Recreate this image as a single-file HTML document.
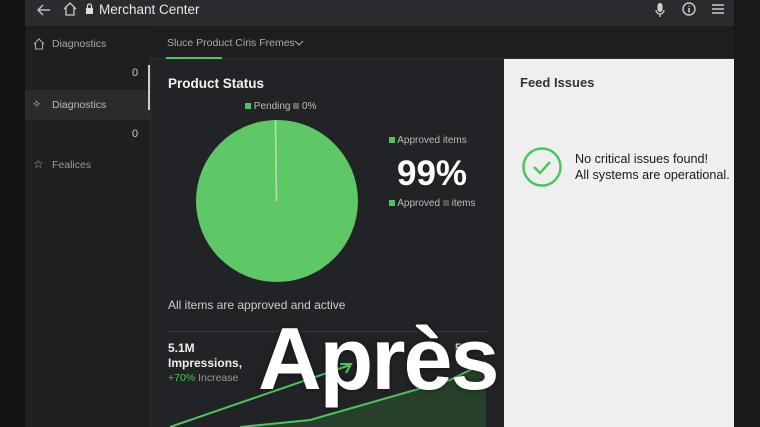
<!DOCTYPE html>
<html><head><meta charset="utf-8"><style>
*{margin:0;padding:0;box-sizing:border-box}
body{width:760px;height:427px;overflow:hidden;background:#151617;font-family:"Liberation Sans",sans-serif;position:relative}
.a{position:absolute}
</style></head><body>
<div class="a" style="left:0;top:0;width:25px;height:427px;background:#131415"></div>
<div class="a" style="left:734px;top:0;width:26px;height:427px;background:#18191a"></div>
<div class="a" style="left:25px;top:0;width:709px;height:26px;background:#2a2b2e"></div>
<div class="a" style="left:25px;top:26px;width:125px;height:401px;background:#1e1f21"></div>
<div class="a" style="left:25px;top:90px;width:125px;height:30px;background:#2a2b2d"></div>
<div class="a" style="left:148px;top:65px;width:2px;height:45px;background:#ccc"></div>
<div class="a" style="left:150px;top:26px;width:584px;height:33px;background:#1d1e20;border-bottom:1px solid #2e2f31"></div>
<div class="a" style="left:150px;top:59px;width:354px;height:368px;background:#222326;border-left:1px solid #2e2f31"></div>
<div class="a" style="left:504px;top:59px;width:230px;height:368px;background:#efefef"></div>
<svg class="a" style="left:34px;top:2px" width="20" height="16" viewBox="0 0 20 16"><path d="M16 8H4M9 3L4 8l5 5" stroke="#bbb" stroke-width="1.5" fill="none"/></svg>
<svg class="a" style="left:62px;top:1px" width="16" height="16" viewBox="0 0 16 16"><path d="M2 8L8 2l6 6M4 6.5V14h8V6.5" stroke="#ccc" stroke-width="1.3" fill="none"/></svg>
<svg class="a" style="left:85px;top:3px" width="9" height="11" viewBox="0 0 9 11"><rect x="1" y="5" width="7" height="6" fill="#ddd"/><path d="M2.5 5V3a2 2 0 0 1 4 0v2" stroke="#ddd" stroke-width="1.3" fill="none"/></svg>
<div class="a" style="left:99px;top:2px;color:#e6e6e6;font-size:13.5px">Merchant Center</div>
<svg class="a" style="left:654px;top:2px" width="12" height="16" viewBox="0 0 12 16"><rect x="3.5" y="1" width="5" height="9" rx="2.5" fill="#ccc"/><path d="M2 8a4 4 0 0 0 8 0M6 12v3" stroke="#ccc" stroke-width="1.3" fill="none"/></svg>
<svg class="a" style="left:681px;top:1px" width="16" height="16" viewBox="0 0 16 16"><circle cx="8" cy="8" r="6" stroke="#ccc" stroke-width="1.4" fill="none"/><path d="M8 7v4.5M8 4.5v1" stroke="#ccc" stroke-width="1.6"/></svg>
<svg class="a" style="left:711px;top:2px" width="14" height="14" viewBox="0 0 14 14"><path d="M1 3h12M1 7h12M1 11h12" stroke="#ccc" stroke-width="1.4"/></svg>
<svg class="a" style="left:33px;top:38px" width="12" height="12" viewBox="0 0 12 12"><path d="M1 6l5-5 5 5M2.5 5v6h7V5" stroke="#aaa" stroke-width="1.1" fill="none"/></svg>
<div class="a" style="left:52px;top:38px;color:#aaa;font-size:10.5px">Diagnostics</div>
<div class="a" style="left:132px;top:67px;color:#ccc;font-size:11px">0</div>
<div class="a" style="left:33px;top:98px;color:#aaa;font-size:11px">⟡</div>
<div class="a" style="left:52px;top:99px;color:#bbb;font-size:10.5px">Diagnostics</div>
<div class="a" style="left:132px;top:128px;color:#ccc;font-size:11px">0</div>
<div class="a" style="left:33px;top:157px;color:#aaa;font-size:12px">☆</div>
<div class="a" style="left:52px;top:159px;color:#999;font-size:10.5px">Fealices</div>
<div class="a" style="left:167px;top:37px;color:#aaa;font-size:10.5px">Sluce Product Ciris Fremes</div>
<svg class="a" style="left:294px;top:39px" width="10" height="8" viewBox="0 0 10 8"><path d="M1 2l4 4 4-4" stroke="#aaa" stroke-width="1.1" fill="none"/></svg>
<div class="a" style="left:166px;top:57px;width:56px;height:2px;background:#4ec45c"></div>
<div class="a" style="left:168px;top:76px;color:#f2f2f2;font-size:13.5px;font-weight:bold">Product Status</div>
<div class="a" style="left:245px;top:101px;color:#bbb;font-size:10px"><span style="display:inline-block;width:6px;height:6px;background:#4ec45c"></span> Pending <span style="display:inline-block;width:6px;height:6px;background:#666"></span> 0%</div>
<svg class="a" style="left:196px;top:120px" width="162" height="162"><circle cx="81" cy="81" r="81" fill="#5ec766"/><line x1="79.5" y1="0" x2="80.5" y2="81" stroke="#b8e0b8" stroke-width="1.5"/></svg>
<div class="a" style="left:389px;top:135px;color:#bbb;font-size:10px"><span style="display:inline-block;width:6px;height:6px;background:#4ec45c"></span> Approved items</div>
<div class="a" style="left:397px;top:154px;color:#fff;font-size:35px;font-weight:bold">99%</div>
<div class="a" style="left:389px;top:198px;color:#bbb;font-size:10px"><span style="display:inline-block;width:6px;height:6px;background:#4ec45c"></span> Approved <span style="display:inline-block;width:6px;height:6px;background:#555"></span> items</div>
<div class="a" style="left:168px;top:298px;color:#ccc;font-size:12px">All items are approved and active</div>
<div class="a" style="left:167px;top:331px;width:319px;height:1px;background:#363739"></div>
<div class="a" style="left:168px;top:341px;color:#eee;font-size:12px;font-weight:bold;line-height:15px">5.1M<br>Impressions,</div>
<div class="a" style="left:168px;top:372px;color:#999;font-size:10.5px"><span style="color:#4ec45c">+70%</span> Increase</div>
<svg class="a" style="left:150px;top:340px" width="354" height="87"><path d="M90 87L160 80Q230 60 300 40L336 22V87Z" fill="#27402a"/><path d="M90 87L160 80Q230 60 300 40L336 22" stroke="#4ec45c" stroke-width="2" fill="none"/><path d="M20 87L200 25" stroke="#4ec45c" stroke-width="2" fill="none"/><path d="M190 24l11 0-5 9" stroke="#4ec45c" stroke-width="2" fill="none"/></svg>
<div class="a" style="left:455px;top:341px;color:#ddd;font-size:12px;font-weight:bold">55</div>
<div class="a" style="left:520px;top:75px;color:#333;font-size:13px;font-weight:bold">Feed Issues</div>
<svg class="a" style="left:521px;top:146px" width="42" height="42"><circle cx="21" cy="21" r="18.5" stroke="#4ec45c" stroke-width="2.5" fill="none"/><path d="M13 21l6 6 10-11" stroke="#4ec45c" stroke-width="2.5" fill="none"/></svg>
<div class="a" style="left:575px;top:151px;color:#1a1a1a;font-size:12.6px;line-height:16px">No critical issues found!<br>All systems are operational.</div>
<div class="a" style="left:258px;top:315px;color:#fff;font-size:88px;line-height:88px;font-weight:bold;letter-spacing:-2px;text-shadow:0 0 6px rgba(0,0,0,.5)">Après</div>
</body></html>
